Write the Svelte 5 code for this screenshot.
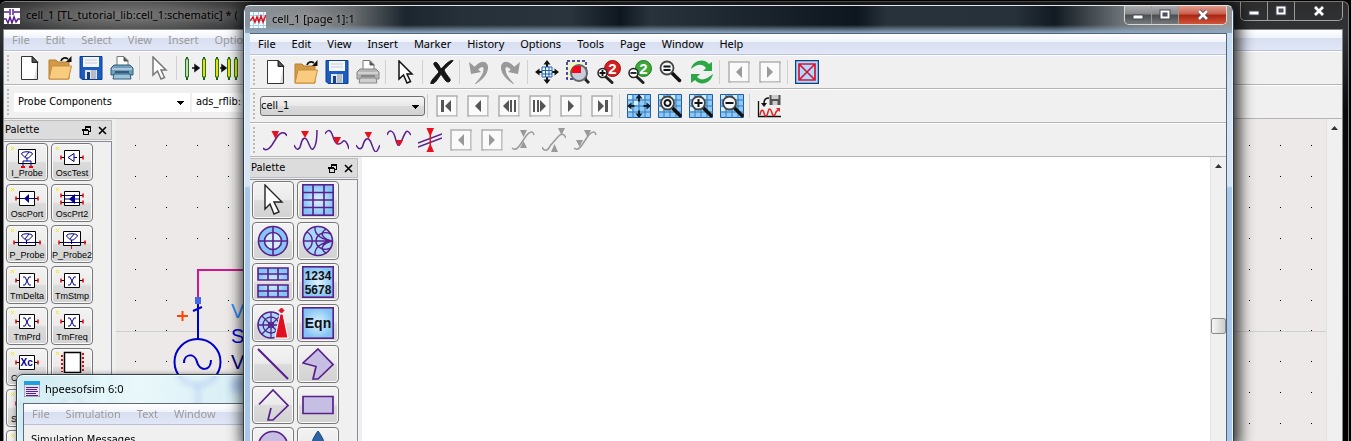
<script>
  const doc = '<path d="M4.500 .5h11l5 5.500v17.500h-16z" fill="#fff" stroke="#333"/><path d="M15 .5v6h6z" fill="#555" stroke="#222"/><path d="M20 8v15h-3z" fill="#ddd"/>';
  const folder = '<path d="M1 4h7l2 2h11v17H1z" fill="#d39a45" stroke="#b97f30"/><path d="M4 10h19.500l-3 13H1z" fill="#f8cb7f" stroke="#c78e3c"/><path d="M13 5c1-3 4-4 7-2" fill="none" stroke="#111" stroke-width="1.800"/><path d="M18 6h5.500V0z" fill="#111"/>';
  const floppy = '<path d="M1 .5h22v23H3l-2-2z" fill="#1a5cc0" stroke="#0e3f92"/><path d="M4 1h16v10H4z" fill="#f4f6fa"/><path d="M6 4h12M6 7h12" stroke="#c3cbd8"/><path d="M6 14h12v9H6z" fill="#dfe3ea"/><path d="M8 16h3v7H8z" fill="#1b3f7d"/><path d="M12 14h5v9h-5z" fill="#b6bcc6"/>';
  const printer = (a, b, c) => `<path d="M7 10V.5h7l4 4V10z" fill="#fff" stroke="#777"/><path d="M14 1v4h4" fill="#555" stroke="#555"/><path d="M4 9h16l3 3v7H1v-7z" fill="${a}" stroke="${b}"/><path d="M2 13h20" stroke="#eee"/><path d="M4 18h16l1 5H3z" fill="${c}" stroke="${b}"/><path d="M5 16h14" stroke="${b}" stroke-width="2"/>`;
  const cursor = (c) => `<path d="M6 1v18l4.500-4 3.500 8 3.500-1.500-3.500-7.500h5z" fill="#fff" stroke="${c}" stroke-width="1.500"/>`;
  const pin = (x, f) => `<path d="M${x} 1v23" stroke="#186018" stroke-width="2"/><path d="M${x - 1.5} 3h3v18h-3z" fill="${f}" stroke="#287028"/>`;
  const boxed = (p, c = '#555') => `<path d="M2 2h20v20H2z" fill="#fafafa" stroke="#aeaeae" stroke-width="1.500"/><path d="M22.500 4v18.500H4" fill="none" stroke="#d4d4d4"/><g fill="${c}">${p}</g>`;
  const left = '<path d="M15 6v12L9 12z"/>';
  const right = '<path d="M9 6v12L15 12z"/>';
  const lens = (x, y, r, s) => `<path d="M${x + r - 1} ${y + r - 1}L${x + r + 6} ${y + r + 6}" stroke="#111" stroke-width="3.500" stroke-linecap="round"/><circle cx="${x}" cy="${y}" r="${r}" fill="#f4f7f8" stroke="#444" stroke-width="1.800"/><path d="${s}" fill="none" stroke="#111" stroke-width="2"/>`;
  const mesh = '<path d="M.5.5h23v23H.5z" fill="#8ec9f4" stroke="#1d5da8"/><path d="M0 6h24M0 12h24M0 18h24M6 0v24M12 0v24M18 0v24" stroke="#3478bd" fill="none"/><path d="M1 1h4v4H1zM7 7h4v4H7zM13 1h4v4h-4zM1 13h4v4H1z" fill="#d5efff"/>';
  const four = (c) => `<path d="M12 0l3.500 4.500H13v3h-2v-3H8.500zM12 24l3.500-4.500H13v-3h-2v3H8.500zM0 12l4.500-3.500v2.500h3v2h-3v2.500zM24 12l-4.500-3.500v2.500h-3v2h3v2.500z" fill="${c}"/>`;
  const zoom2 = (c, d, s) => `<circle cx="15.500" cy="8.500" r="8" fill="${c}" stroke="${d}"/><text x="15.500" y="14" text-anchor="middle" font-family="Liberation Sans, sans-serif" font-weight="bold" font-size="15" fill="#fff">2</text><path d="M9 17l6 5.500" stroke="#222" stroke-width="3" stroke-linecap="round"/><circle cx="5.500" cy="13" r="4.500" fill="#fff" stroke="#222" stroke-width="1.500"/><path d="${s}" stroke="#111" stroke-width="1.800"/>`;
  const wave = (d, t) => `<path d="${d}" fill="none" stroke="#58208c" stroke-width="1.500"/><path d="${t}" fill="#e8101c"/>`;
  const gray = (t) => `<path d="M1 20c3 3 6 0 8-3l6-9c3-4 7-6 8-1" fill="none" stroke="#999" stroke-width="1.500"/><path d="${t}" fill="#999"/>`;
  const bluegrid = '<path d="M7 7h10v10H7z" fill="#e8f6ff"/><path d="M7 7h10v10H7zM7 10.500h10M7 14h10M10.500 7v10M14 7v10" fill="none" stroke="#225caa"/>';
  const curl = '<path d="M6 10C10 2 20 -1 20.500 7c0 6-4 12-12 16.500 5-5 8.500-10 8.500-14 0-5-5-3-8 3z" fill="#999" stroke="#999"/><path d="M2 2l2 12 10-2z" fill="#999"/>';

  const icons = {
    doc, folder, floppy,
    printer: printer('#6f9ebd', '#315d7b', '#9bc3db'),
    printerOff: printer('#b5b5b5', '#888', '#d0d0d0'),
    cursorOff: cursor('#777'),
    cursor: cursor('#111'),
    pins1: pin(3, '#b8e0a8') + '<path d="M8 12h4M11 9l4 3-4 3z" stroke="#111" stroke-width="1.500"/>' + pin(20, '#e8e000'),
    pins2: pin(2, '#e8e000') + '<path d="M5 12h3M7 9l4 3-4 3z" stroke="#111" stroke-width="1.500"/>' + pin(14, '#e8e000') + pin(21, '#e8e000'),
    cross: '<path d="M4 3c3-2 4 1 7 6C14 6 18 1 23 0c0 2-6 6-9 10 4 8 7 8 6 11-3 3-5-1-9-7-4 6-6 10-10 10-1-3 4-7 8-12C6 7 3 5 4 3z" fill="#151515" stroke="#151515"/>',
    undo: curl,
    redo: `<g transform="translate(24 0) scale(-1 1)">${curl}</g>`,
    fit: four('#111') + bluegrid,
    area: '<path d="M1 1h19v18H1z" fill="#f2f4c8" stroke="#16169a" stroke-dasharray="3 2" stroke-width="1.500"/><path d="M19 19l4 4" stroke="#222" stroke-width="3"/><circle cx="13" cy="13" r="8" fill="#c5cede" stroke="#666" stroke-width="2"/><path d="M6 13V8l3-2h6v7z" fill="#f00818"/>',
    zin: zoom2('#d42020', '#9a1010', 'M5.500 10v6M2.500 13h6'),
    zout: zoom2('#3da83a', '#207a20', 'M2.500 13h6'),
    zeq: lens(8, 8, 6.5, 'M4.500 6.500h7M4.500 10h7'),
    refresh: '<g fill="#2ba845"><path d="M1 9C3 0 14-2 19 4l3-2v9h-9l3-3C12 3 7 4 1 9z"/><path d="M23 14C21 24 10 26 5 20l-4 3v-9h9l-3 3c4 4 9 3 16-3z"/></g>',
    prevOff: boxed(left, '#999'),
    nextOff: boxed(right, '#999'),
    boxX: '<path d="M.5.500h23v23H.5z" fill="#a8dcff" stroke="#123c80" stroke-width="1.500"/><path d="M4 4h16v16H4zM4 4l16 16M20 4L4 20" fill="none" stroke="#e01030" stroke-width="1.700"/>',
    first: boxed('<path d="M6 6h3v12H6zM16 6v12l-6-6z"/>'),
    prev: boxed(left),
    stepBack: boxed('<path d="M12 6v12l-6-6zM13 6h2v12h-2zM17 6h2v12h-2z"/>'),
    stepFwd: boxed('<path d="M5 6h2v12H5zM9 6h2v12H9zM12 6v12l6-6z"/>'),
    next: boxed(right),
    last: boxed('<path d="M15 6h3v12h-3zM8 6v12l6-6z"/>'),
    meshFit: mesh + four('#102030'),
    meshO: mesh + lens(9.5, 9, 6.5, 'M9.500 6a3 3 0 1 0 .1 0z'),
    meshIn: mesh + lens(9.5, 9, 6.5, 'M9.500 5v8M5.500 9h8'),
    meshOut: mesh + lens(9.5, 9, 6.5, 'M5.500 9h8'),
    saveWave: '<path d="M1.500 7v15.500H24" fill="none" stroke="#111" stroke-width="1.300"/><path d="M3 21c1-6 3-6 4-2s3 4 4-1 3-3 4 1 3 3 4-1l3-3" fill="none" stroke="#e82020" stroke-width="1.500"/><path d="M19 14h4v4z" fill="#e82020"/><path d="M12.500 1h11v10h-11z" fill="#555"/><path d="M14.500 1h7v4h-7zM15.500 7h5v4h-5z" fill="#ccc"/><path d="M12 4C8 4 7 7 7 9" fill="none" stroke="#111" stroke-width="1.500"/><path d="M4 9h6l-3 4z" fill="#111"/>',
    w1: wave('M0 20c3 4 7 0 9-3l5-8c3-5 8-6 10-1', 'M8.500 3h7.500l-3.500 8z'),
    w2: wave('M0 17c3 7 6 4 7-1s4-9 7-2 4 10 7 4c2-5 2-11 2-16', 'M7 3h8l-4 7z'),
    w3: wave('M0 6c2-4 5-5 7 0s2 9 6 10 5-6 8-2 2 5 3 7', 'M8 9h8l-4 8z'),
    w4: wave('M0 17c3 6 6 4 7 0s5-12 9 0 5 6 8 0', 'M8.500 4h7.500l-3.500 7z'),
    w5: wave('M0 7c2-6 6-5 8 2s3 13 7 3 5-11 9-5', 'M8.500 12h7.500l-3.500 6z'),
    w6: '<path d="M0 15L24 6M0 19L24 10" stroke="#58208c" stroke-width="1.500"/><path d="M8.500 0h7.500l-3 7v10l3 7H8.500l3-7V7z" fill="#e8101c"/>',
    g1: gray('M9 2h7l-3.500 7zM9 20h7l-3.500-7z'),
    g2: '<path d="M0 19c2 5 6 4 8-1l7-8c4-5 7-5 9 0" fill="none" stroke="#999" stroke-width="1.500"/><path d="M16 0h7l-3.500 7zM9 24h7l-3.500-8z" fill="#999"/>',
    g3: gray('M11 2h7l-3.500 7zM3 12h7l-3.500 7z')
  };

  const schematicBar = ['doc', 'folder', 'floppy', 'printer', '|', 'cursorOff', '|', 'pins1', 'pins2'];
  const bar1 = ['doc', 'folder', 'floppy', 'printerOff', '|', 'cursor', '|', 'cross', '|', 'undo', 'redo', '|', 'fit', 'area', 'zin', 'zout', 'zeq', 'refresh', '|', 'prevOff', 'nextOff', '|', 'boxX'];
  const bar2 = ['|', 'first', 'prev', 'stepBack', 'stepFwd', 'next', 'last', '|', 'meshFit', 'meshO', 'meshIn', 'meshOut', '|', 'saveWave'];
  const bar3 = ['w1', 'w2', 'w3', 'w4', 'w5', 'w6', 'prevOff', 'nextOff', 'g1', 'g2', 'g3'];

  const lead = (x1, x2, y) => `<path d="M${x1} ${y}h${x2 - x1}" stroke="#000"/>`;
  const end = (x, y) => `<path d="M${x} ${y - 2}v4" stroke="#e00" stroke-width="1.500"/>`;
  const body = '<path d="M12.500 6.500h15v14h-15z" fill="#fff" stroke="#000"/>';
  const pair = lead(9, 31, 13.5) + end(9, 13.5) + end(31, 13.5);
  const meter = '<path d="M11.500 5.500h17v14h-17z" fill="#fff" stroke="#000"/><path d="M14.500 10c0-3 11-3 11 0l-4 4h-3zM18 13l4-5" fill="none" stroke="#000090"/>';
  const tm = pair + body + '<path d="M16 10h2l4 8h2M24 10h-2l-4 8h-2" fill="none" stroke="#000090"/>';
  const probe = lead(7, 34, 16.5) + meter + '<path d="M11 16.500h18M19.500 14v4" stroke="#000090"/>' + end(7, 16.5) + end(33, 16.5);
  const parts = [
    ['I_Probe', meter + '<path d="M16 22v-5h8v5M20 14v3" fill="none" stroke="#000090"/><path d="M14 23h4M22 23h4" stroke="#e00" stroke-width="2"/>'],
    ['OscTest', pair + body + '<path d="M22 9.500v8l-6-4zM22 13.500h3" fill="none" stroke="#000090"/>'],
    ['OscPort', pair + body + '<path d="M12 13.500h16" stroke="#000090"/><path d="M22 9v9l-5-4.500z" fill="#000090"/>'],
    ['OscPrt2', lead(9, 31, 10.5) + lead(9, 31, 17.5) + body + '<path d="M13 10.500h14M13 14h14M13 17.500h14" stroke="#000090"/><path d="M23 9v10l-6-5z" fill="#000090"/>' + end(9, 10.5) + end(9, 17.5) + end(31, 10.5) + end(31, 17.5)],
    ['P_Probe', probe],
    ['P_Probe2', probe + '<path d="M19.500 20v3" stroke="#e00"/>'],
    ['TmDelta', tm], ['TmStmp', tm], ['TmPrd', tm], ['TmFreq', tm],
    ['C', pair + body + '<text x="13.500" y="17" font-family="Liberation Sans, sans-serif" font-weight="bold" font-size="10" fill="#000090">Xc</text>'],
    ['', '<path d="M12.500 3.500h16v20h-16z" fill="#fff" stroke="#000" stroke-width="1.500"/><path d="M10 6v17M31 4v20" stroke="#e00" stroke-width="2" stroke-dasharray="2 2"/>'],
    ['S', pair], ['', pair + body], ['', ''], ['', '']
  ];

  const P = '#58208c';
  const shade = '<rect x=".8" y=".8" width="30.400" height="30.400" fill="url(#sky)" stroke="#58208c" stroke-width="1.600"/>';
  const num = (y, t) => `<text x="16" y="${y}" text-anchor="middle" font-family="Liberation Sans, sans-serif" font-weight="bold" font-size="12" fill="#111">${t}</text>`;
  const tools = [
    ['Select', '<path d="M8 1v24l5-5 4 10 5-2-5-10h8z" fill="#fff" stroke="#222" stroke-width="1.400"/>'],
    ['Rectangular plot', shade + `<path d="M11 1v30M22 1v30M1 8.500h30M1 16h30M1 23.500h30" stroke="${P}" stroke-width="1.600"/>`],
    ['Polar plot', `<circle cx="16" cy="16" r="14.500" fill="#86c5f5" stroke="${P}" stroke-width="1.600"/><circle cx="16" cy="16" r="8.500" fill="#d3edfc" stroke="${P}" stroke-width="1.600"/><path d="M16 1v30M1 16h30" stroke="${P}" stroke-width="1.600"/>`],
    ['Smith chart', `<circle cx="16" cy="16" r="14.500" fill="#a9d9fa" stroke="${P}" stroke-width="1.600"/><path d="M1 16h29M30 16C22 15 12 11 13 2M30 16C22 17 12 21 13 30M30 16C22 14 16 9 24 4M30 16C22 18 16 23 24 28M5 7c7 4 7 14 0 18M29 9c-9-4-15 2-15 7s6 11 15 7" fill="none" stroke="${P}" stroke-width="1.400"/>`],
    ['Stacked plot', `<path d="M1 2h30v12H1zM1 19h30v12H1z" fill="url(#sky)" stroke="${P}" stroke-width="1.600"/><path d="M1 8h30M11 2v12M21 2v12M1 25h30M11 19v12M21 19v12" stroke="${P}" stroke-width="1.600"/>`],
    ['List', shade + num(14, '1234') + num(28, '5678')],
    ['Antenna plot', `<circle cx="14" cy="18" r="13" fill="#a9d9fa" stroke="${P}" stroke-width="1.600"/><circle cx="14" cy="18" r="8" fill="none" stroke="${P}" stroke-width="1.300"/><circle cx="14" cy="18" r="3" fill="none" stroke="${P}"/><path d="M1 18h26M14 5v26M5 9l18 18M23 9L5 27" stroke="${P}" stroke-width="1.300"/><path d="M23 7h3l5 24H18z" fill="#e01020" stroke="#fff"/><path d="M24.500 1l2.500 2.500-2.500 2.500L22 3.500z" fill="#e01020" stroke="#e01020"/>`],
    ['Equation', shade + '<text x="16" y="21" text-anchor="middle" font-family="Liberation Sans, sans-serif" font-weight="bold" font-size="14" fill="#111">Eqn</text>'],
    ['Line', `<path d="M1 1l30 30" stroke="${P}" stroke-width="2.200"/>`],
    ['Polygon', `<path d="M16 1l15 15.500L16 31h-5l3-12.500-13-3.500z" fill="#c6bfe3" stroke="${P}" stroke-width="1.700"/>`],
    ['Polyline', `<path d="M2 15.500L16 1l15 15.500L16 31h-5l3-12" fill="none" stroke="${P}" stroke-width="1.700"/>`],
    ['Rectangle', `<path d="M1 7.500h30v17H1z" fill="#c6bfe3" stroke="${P}" stroke-width="1.700"/>`],
    ['Circle', `<circle cx="16" cy="16" r="14.500" fill="#c6bfe3" stroke="${P}" stroke-width="1.700"/>`],
    ['Arrow', '<path d="M16 1c4 5 8 14 9 20H7c1-6 5-15 9-20z" fill="#2d62a3" stroke="#1d447a"/>']
  ];

  const dots = [];
  for (let r = 0; r < 11; r++) for (let c = 0; c < 40; c++) dots.push([135 + Math.round(c * 30.94), 145 + Math.round(r * 30.9)]);
</script>

{#snippet menu(items)}
  <nav class="menubar">
    {#each items as item}<button>{item}</button>{/each}
  </nav>
{/snippet}

{#snippet tray(names)}
  {#each names as name}
    {#if name === '|'}
      <span class="sep"></span>
    {:else}
      <button class="tool" aria-label={name}><svg width="24" height="24" viewBox="0 0 24 24">{@html icons[name]}</svg></button>
    {/if}
  {/each}
{/snippet}

{#snippet caption()}
  <div class="caption">
    <button aria-label="Minimize"><svg width="12" height="12"><rect x="1" y="6" width="10" height="4" fill="#fff" stroke="#445" /></svg></button>
    <button aria-label="Maximize"><svg width="12" height="12"><rect x="1" y="1" width="10" height="9" fill="#fff" stroke="#445" /><rect x="4" y="4" width="4" height="3" fill="#556" stroke="#445" /></svg></button>
    <button class="close" aria-label="Close"><svg width="14" height="12"><path d="M3 2l8 8M11 2l-8 8" stroke="#445" stroke-width="4" /><path d="M3 2l8 8M11 2l-8 8" stroke="#fff" stroke-width="2.600" /></svg></button>
  </div>
{/snippet}

{#snippet paletteHead()}
  <header class="phead">
    <span>Palette</span>
    <button aria-label="Float"><svg width="9" height="9" shape-rendering="crispEdges"><path d="M3.500 3V1.500h5v4H6M1 4.500h5v4H1z" fill="none" stroke="#000" /><path d="M3 1h6M0 4h6" stroke="#000" stroke-width="2" /></svg></button>
    <button aria-label="Close palette"><svg width="9" height="9"><path d="M1 1l7 7M8 1L1 8" stroke="#000" stroke-width="1.600" /></svg></button>
  </header>
{/snippet}

{#snippet upArrow()}
  <svg width="7" height="5"><path d="M0 5l3.500-4L7 5z" fill="#333" /></svg>
{/snippet}

<svg class="defs" width="0" height="0" aria-hidden="true">
  <radialGradient id="sky"><stop offset="0" stop-color="#e0f4ff" /><stop offset="1" stop-color="#84c4f4" /></radialGradient>
</svg>

<main class="desktop">
  <section class="window schematic">
    <div class="title">
      <svg width="16" height="16"><path d="M0 0h16v16H0z" fill="#fff" /><path d="M0 4h5M10 4h6M6 1v6M9 1v6" stroke="#58208c" stroke-width="1.500" /><path d="M0 11h2l2 4 2-6 2 6 2-6 2 5 2-3h2" fill="none" stroke="#58208c" stroke-width="1.500" /></svg>
      <h1>cell_1 [TL_tutorial_lib:cell_1:schematic] * (</h1>
      {@render caption()}
    </div>
    <div class="client">
      {@render menu(['File', 'Edit', 'Select', 'View', 'Insert', 'Options'])}
      <div class="bar"><i class="grip"></i>{@render tray(schematicBar)}</div>
      <div class="bar">
        <i class="grip"></i>
        <select class="flat" aria-label="Component palette"><option>Probe Components</option></select>
        <select class="flat" aria-label="Component library"><option>ads_rflib:</option></select>
      </div>
      <div class="work">
        <aside>
          {@render paletteHead()}
          <div class="pgrid">
            {#each parts as [label, art]}
              <button class="part" class:start={label.length === 1}>
                <svg width="40" height="24" viewBox="0 0 40 24"><path d="M4 3h1v1H4zM6 3h1v1H6zM5 4h1v1H5zM4 5h1v1H4zM6 5h1v1H6z" fill="#f2ea00" />{@html art}</svg>
                <span>{label}</span>
              </button>
            {/each}
          </div>
        </aside>
        <div class="canvas">
          <svg width="1220" height="340" viewBox="116 119 1220 340">
            <path d="M116 331.500h1220" stroke="#cbd0ce" />
            {#each dots as [x, y]}<rect {x} {y} width="1" height="1" />{/each}
            <path d="M198 300v-30h60" fill="none" stroke="#d0188c" stroke-width="2" />
            <g fill="none" stroke="#0000c8" stroke-width="2"><path d="M198 303v37M193 311l9-4M198 385v40M184 363c0-10 11-10 13-1s14 10 14-2" /><circle cx="197.500" cy="362" r="23" /></g>
            <rect x="195" y="297" width="6" height="7" fill="#4169e1" />
            <path d="M177 316h11M182.500 311v10" stroke="#ff4500" stroke-width="2" />
            <g font-family="Liberation Sans, sans-serif" font-size="20">
              <text x="231" y="318" fill="#1e90ff">V</text>
              <text x="231" y="343" fill="#0000e0">S</text>
              <text x="231" y="369" fill="#000080">V</text>
              <text x="231" y="393" fill="#0000c8" font-weight="bold">R</text>
            </g>
          </svg>
        </div>
        <div class="scroll">{@render upArrow()}</div>
      </div>
    </div>
  </section>

  <section class="window sim">
    <div class="title">
      <svg width="16" height="16"><path d="M0 0h16v16H0z" fill="#e8e0f4" stroke="#777" /><path d="M0 0h16v4H0z" fill="#1e9fe0" /><path d="M2 6.500h12M2 8.500h11M2 10.500h12M2 12.500h10M2 14.500h12" stroke="#58208c" /></svg>
      <h2>hpeesofsim 6:0</h2>
    </div>
    <div class="client">
      {@render menu(['File', 'Simulation', 'Text', 'Window'])}
      <p>Simulation Messages</p>
    </div>
  </section>

  <section class="window display">
    <div class="title">
      <svg width="16" height="16"><path d="M0 0h16v16H0z" fill="#f4fbff" /><path d="M3.500 0v16M8.500 0v16M13.500 0v16M0 3.500h16M0 8.500h16M0 13.500h16" stroke="#9ed4f2" /><path d="M0 9l3-4 2 5 2-5 2 5 2-6 2 6 3-7" fill="none" stroke="#d81824" stroke-width="1.600" /></svg>
      <h2>cell_1 [page 1]:1</h2>
      {@render caption()}
    </div>
    <div class="client">
      {@render menu(['File', 'Edit', 'View', 'Insert', 'Marker', 'History', 'Options', 'Tools', 'Page', 'Window', 'Help'])}
      <div class="bar"><i class="grip"></i>{@render tray(bar1)}</div>
      <div class="bar">
        <i class="grip"></i>
        <select class="raised" aria-label="Dataset"><option>cell_1</option></select>
        {@render tray(bar2)}
      </div>
      <div class="bar"><i class="grip"></i>{@render tray(bar3)}</div>
      <div class="work">
        <aside>
          {@render paletteHead()}
          <div class="pgrid">
            {#each tools as [label, art]}
              <button class="part big" aria-label={label}><svg width="32" height="32" viewBox="0 0 32 32">{@html art}</svg></button>
            {/each}
          </div>
        </aside>
        <div class="page"></div>
        <div class="scroll">{@render upArrow()}<span class="thumb"></span></div>
      </div>
    </div>
  </section>
</main>

<style>
  :global(body) { margin: 0; background: #000; }
  .desktop { position: relative; height: 100vh; overflow: hidden; background: #000; color: #000; font: 11px/14px "DejaVu Sans Condensed", "Noto Sans", sans-serif; }
  .defs { position: absolute; }
  svg { display: block; flex: none; }
  button { border: 0; padding: 0; margin: 0; background: none; font: inherit; color: inherit; }
  h1, h2, p { margin: 0; font: inherit; }
  .window { position: absolute; display: flex; flex-direction: column; box-sizing: border-box; overflow: hidden; }
  .title { display: flex; align-items: center; flex: none; gap: 6px; box-sizing: border-box; font: 11px/16px "Noto Sans", sans-serif; white-space: nowrap; }
  .title h1, .title h2 { padding-bottom: 1px; }
  .caption { display: flex; align-self: flex-start; margin-left: auto; border: 1px solid #a2a2a2; border-top: 0; border-radius: 0 0 5px 5px; overflow: hidden; }
  .caption button { display: grid; place-items: center; width: 27px; height: 18px; border-right: 1px solid #999; }
  .caption .close { width: 47px; border: 0; }
  .client { flex: 1; min-height: 0; display: flex; flex-direction: column; background: #f0f0f0; overflow: hidden; }

  .schematic { left: 0; right: 2px; top: 1px; bottom: -8px; padding: 0 5px 0 3px; border-top: 1px solid #777; border-right: 1px solid #777; border-radius: 6px; background: linear-gradient(#2d2d2d, #303336 30px, #080a0c 110px, #000); }
  .schematic .title { height: 27px; padding-left: 1px; background: radial-gradient(ellipse 145px 24px at 125px 13px, #777, #5a5a5a 50%, transparent); }
  .schematic h1 { text-shadow: 0 0 6px #999; }
  .schematic .client { border: 1px solid #888; border-bottom: 0; }
  .schematic .menubar { color: #9b9b9b; }

  .display { left: 243px; right: 117px; top: 5px; bottom: -8px; padding: 0 6px; border: 1px solid #2b3b4c; border-top-color: #e4e8ea; border-radius: 7px; box-shadow: 2px 0 15px 3px rgba(0, 0, 0, .85), inset 1px 0 #edf5fc, inset -1px 0 #edf5fc; background: linear-gradient(#8b99a5, #c7dcf0 28px, #d7e5f4 110px, #d4e5f5 180px, #a9c7e8 182px, #a9c7e8); }
  .display .title { height: 27px; margin: 0 -5px; padding: 0 5px; background: linear-gradient(transparent 70%, #8fa9c4), linear-gradient(90deg, #88929a, #87898b 60px, #65696c 110px, #1c262e 160px, #263039 22%, #2a343c 33%, #0e171f 38%, #29333b 41%, #0d161e 62%, #28323a 65%, #27313a 78%, #111a21 82%, #6f7579 89%, #999); }
  .display h2 { text-shadow: 0 0 6px #ccc; }
  .display .client { border: 1px solid #506579; border-width: 1px 1px 0 0; }
  .display .caption { border-color: #d8d8d8; }
  .display .caption button { background: linear-gradient(#a8aaab, #858789 45%, #4a4e51 50%, #77797b); }
  .display .caption .close { background: linear-gradient(#df9a8a, #cb5d4b 45%, #a92513 50%, #d35337); }

  .sim { left: 16px; width: 600px; top: 374px; bottom: -30px; padding: 0 6px; border: 1px solid #34414c; border-radius: 7px; background: linear-gradient(90deg, rgba(205, 240, 250, .8), rgba(232, 252, 255, .78) 120px, rgba(205, 240, 250, .72) 230px); backdrop-filter: blur(3px); box-shadow: inset 0 0 0 1px #f4ffff, 0 0 5px rgba(0, 0, 0, .4); }
  .sim .title { height: 28px; padding-left: 1px; gap: 5px; }
  .sim .client { border: 1px solid #667; border-bottom: 0; }
  .sim .menubar { color: #9b9b9b; }
  .sim p { padding: 8px 7px; }

  .menubar { display: flex; flex: none; height: 20px; border-bottom: 1px solid #b8c0dc; background: linear-gradient(#fff, #f1f4fb 38%, #d8dff0 42%, #e2e7f6); font: 11px/18px "Noto Sans", sans-serif; }
  .menubar button { padding: 0 8px 1px; }
  .bar { display: flex; flex: none; align-items: center; height: 34px; box-sizing: border-box; border-top: 1px solid #fff; border-bottom: 1px solid #b4b4b4; background: #f0f0f0; overflow: hidden; }
  .grip { flex: none; width: 2px; height: 26px; margin: 0 4px 0 3px; background: repeating-linear-gradient(#bbb 0 2px, transparent 2px 4px); }
  .tool { flex: none; width: 31px; height: 31px; display: grid; place-items: center; }
  .sep { flex: none; width: 1px; height: 24px; margin: 0 3px 0 2px; background: #d0d0d0; }
  select { appearance: none; flex: none; box-sizing: border-box; color: #000; font: inherit; margin: 0; }
  .flat { width: 176px; height: 19px; margin: 0 1px; padding: 0 4px; border: 0; border-radius: 0; background: linear-gradient(#000, #000) no-repeat right 9px top 11px / 1px 1px, linear-gradient(#000, #000) no-repeat right 8px top 10px / 3px 1px, linear-gradient(#000, #000) no-repeat right 7px top 9px / 5px 1px, linear-gradient(#000, #000) no-repeat right 6px top 8px / 7px 1px, #fff; }
  .raised { width: 165px; height: 20px; margin-left: 1px; padding: 0; border: 1px solid #707070; border-radius: 3px; background: linear-gradient(#000, #000) no-repeat right 8px top 11px / 1px 1px, linear-gradient(#000, #000) no-repeat right 7px top 10px / 3px 1px, linear-gradient(#000, #000) no-repeat right 6px top 9px / 5px 1px, linear-gradient(#000, #000) no-repeat right 5px top 8px / 7px 1px, linear-gradient(#f4f4f4, #e8e8e8 50%, #dadada 52%, #d2d2d2); }

  .work { flex: 1; min-height: 0; display: flex; background: #f0f0f0; }
  aside { flex: none; width: 108px; display: flex; flex-direction: column; gap: 1px; padding-top: 1px; overflow: hidden; }
  .phead { display: flex; flex: none; align-items: center; height: 20px; box-sizing: border-box; padding: 0 4px 0 1px; gap: 7px; border: 1px solid #bdbdbd; border-left: 0; background: #dcdcdc; }
  .phead span { flex: 1; }
  .pgrid { display: grid; flex: none; grid-template-columns: 42px 42px; align-content: start; gap: 3px; padding: 1px 0 0 2px; border-top: 1px solid #8a8a98; border-right: 1px solid #8a8a98; }
  .part { height: 38px; box-sizing: border-box; display: flex; flex-direction: column; align-items: center; overflow: hidden; border: 1px solid #777; border-radius: 4px; background: linear-gradient(#f3f3f3, #ebebeb 48%, #dbdbdb 52%, #d2d2d2); box-shadow: inset 0 0 0 1px #fafafa; font: 9px/11px "Liberation Sans", sans-serif; }
  .part.big { justify-content: center; }
  .start { align-items: flex-start; }
  .start span { padding-left: 4px; }
  .canvas { flex: 1; min-width: 0; margin-left: 4px; background: #ece9e8; overflow: hidden; }
  .page { flex: 1; margin-left: 4px; background: #fff; }
  .scroll { flex: none; width: 16px; display: flex; flex-direction: column; align-items: center; box-sizing: border-box; padding-top: 6px; border-left: 1px solid #e2e2e2; background: #f0f0f0; }
  .thumb { width: 13px; height: 14px; margin-top: 150px; border: 1px solid #8a8a8a; border-radius: 2px; background: linear-gradient(90deg, #f6f6f6, #cdcdcd); }
</style>
